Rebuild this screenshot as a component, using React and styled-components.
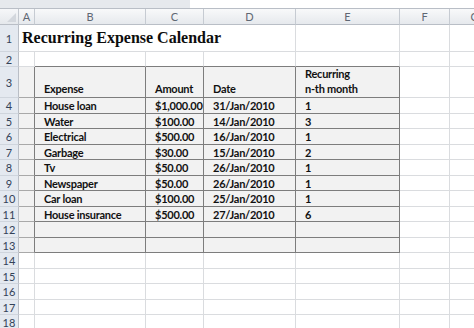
import React from 'react';
import styled, { createGlobalStyle, css } from 'styled-components';

const GlobalStyle = createGlobalStyle`
  html, body {
    margin: 0;
    padding: 0;
    background: #ffffff;
    overflow: hidden;
  }
`;

const GRID = '#dadcdf';
const DARK = '#7d7d7d';
const MID = '#a9a9a9';
const FILL = '#f2f2f2';

const COLS = ['A', 'B', 'C', 'D', 'E', 'F', 'G'];
const ROW_HEIGHTS = [27, 15, 31, 16, 15, 16, 15, 16, 15, 16, 15, 16, 15, 16, 15, 16, 15, 16];

const expenses = [
  { name: 'House loan', amount: '$1,000.00', date: '31/Jan/2010', every: '1' },
  { name: 'Water', amount: '$100.00', date: '14/Jan/2010', every: '3' },
  { name: 'Electrical', amount: '$500.00', date: '16/Jan/2010', every: '1' },
  { name: 'Garbage', amount: '$30.00', date: '15/Jan/2010', every: '2' },
  { name: 'Tv', amount: '$50.00', date: '26/Jan/2010', every: '1' },
  { name: 'Newspaper', amount: '$50.00', date: '26/Jan/2010', every: '1' },
  { name: 'Car loan', amount: '$100.00', date: '25/Jan/2010', every: '1' },
  { name: 'House insurance', amount: '$500.00', date: '27/Jan/2010', every: '6' },
];

const Window = styled.div`
  width: 474px;
  height: 328px;
  overflow: hidden;
  background: #ffffff;
  font-family: Lato, 'Liberation Sans', sans-serif;
`;

const FormulaStrip = styled.div`
  display: grid;
  grid-template-columns: 190px 1fr;
  height: 8px;
  border-bottom: 1px solid #b9bec6;
`;

const StripPart = styled.div`
  background: ${(p) => (p.$grey ? '#e6e9ed' : '#ffffff')};
`;

const Sheet = styled.div`
  display: grid;
  grid-template-columns: 19px 16px 111px 58px 92px 104px 50px 50px;
  grid-template-rows: 16px ${ROW_HEIGHTS.map((h) => `${h}px`).join(' ')};
`;

const Corner = styled.div`
  position: relative;
  background: linear-gradient(#f6f7f9, #e5e8ec);
  border-right: 1px solid #c3c8cf;
  border-bottom: 1px solid #b9bec6;
  &::after {
    content: '';
    position: absolute;
    right: 2px;
    bottom: 2px;
    border-left: 9px solid transparent;
    border-bottom: 9px solid #d3d7dd;
  }
`;

const ColHead = styled.div`
  display: flex;
  align-items: center;
  justify-content: center;
  background: linear-gradient(#f8f9fa, #e6e9ed);
  border-right: 1px solid #c6cbd2;
  border-bottom: 1px solid #b9bec6;
  font-size: 11px;
  color: #5f6773;
`;

const RowHead = styled.div`
  display: flex;
  align-items: center;
  justify-content: center;
  background: #e4e9f0;
  border-right: 1px solid #b9bec6;
  border-bottom: 1px solid #cfd5dd;
  font-size: 11px;
  color: #334258;
`;

const Cell = styled.div`
  display: flex;
  align-items: ${(p) => (p.$bottom ? 'flex-end' : 'center')};
  padding: 0 0 0 9px;
  background: ${(p) => p.$fill || '#ffffff'};
  border-right: 1px solid ${(p) => p.$rightLine || GRID};
  border-bottom: 1px solid ${(p) => p.$bottomLine || GRID};
  font-size: 11px;
  letter-spacing: -0.25px;
  font-weight: 700;
  color: #111111;
  line-height: 15px;
  white-space: nowrap;
  overflow: visible;
  ${(p) =>
    p.$bottom &&
    css`
      padding-bottom: 1px;
    `}
`;

const TitleCell = styled.div`
  grid-column: 2 / span 4;
  display: flex;
  align-items: center;
  padding-left: 3px;
  border-right: 1px solid ${GRID};
  border-bottom: 1px solid ${GRID};
  font-family: 'Liberation Serif', 'DejaVu Serif', serif;
  font-size: 16px;
  font-weight: 700;
  color: #0d0d0d;
  white-space: nowrap;
`;

const Stack = styled.span`
  display: flex;
  flex-direction: column;
`;

function cellContent(row, col) {
  if (row === 3) {
    return {
      B: 'Expense',
      C: 'Amount',
      D: 'Date',
      E: (
        <Stack>
          <span>Recurring</span>
          <span>n-th month</span>
        </Stack>
      ),
    }[col];
  }
  const item = expenses[row - 4];
  if (!item) return null;
  return { B: item.name, C: item.amount, D: item.date, E: item.every }[col];
}

function cellLook(row, ci) {
  const inTableRows = row >= 3 && row <= 13;
  const tableCol = ci >= 1 && ci <= 4;
  const look = {};
  if (inTableRows && ci <= 4) {
    look.fill = FILL;
    look.right = DARK;
    look.bottom = tableCol ? DARK : MID;
  }
  if (row === 2 && tableCol) look.bottom = DARK;
  return look;
}

export default function App() {
  return (
    <Window>
      <GlobalStyle />
      <FormulaStrip>
        <StripPart $grey />
        <StripPart />
      </FormulaStrip>
      <Sheet>
        <Corner />
        {COLS.map((c) => (
          <ColHead key={c}>{c}</ColHead>
        ))}
        {ROW_HEIGHTS.map((_, i) => {
          const row = i + 1;
          if (row === 1) {
            return (
              <React.Fragment key={row}>
                <RowHead>{row}</RowHead>
                <TitleCell>Recurring Expense Calendar</TitleCell>
                <Cell />
                <Cell />
                <Cell />
              </React.Fragment>
            );
          }
          return (
            <React.Fragment key={row}>
              <RowHead>{row}</RowHead>
              {COLS.map((c, ci) => {
                const look = cellLook(row, ci);
                return (
                  <Cell
                    key={c}
                    $fill={look.fill}
                    $rightLine={look.right}
                    $bottomLine={look.bottom}
                    $bottom={row === 3}
                  >
                    {cellContent(row, c)}
                  </Cell>
                );
              })}
            </React.Fragment>
          );
        })}
      </Sheet>
    </Window>
  );
}
